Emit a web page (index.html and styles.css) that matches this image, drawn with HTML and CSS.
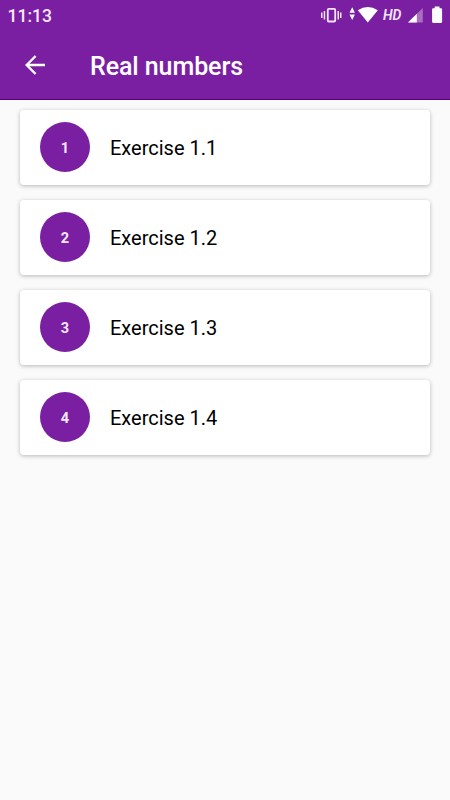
FILE: index.html
```html
<!DOCTYPE html>
<html lang="en">
<head>
<meta charset="utf-8">
<title>Real numbers</title>
<link rel="stylesheet" href="styles.css">
</head>
<body>
<header class="header">
  <div class="status">
    <span class="clock">11:13</span>
    <svg class="status-icons" width="130" height="30" viewBox="320 0 130 30" fill="#fff" aria-hidden="true">
      <path fill="#f3e4f8" d="M321 12.5h1.5v5.5H321zM323.7 11h1.5v8.5h-1.5zM337.5 11h1.5v8.5h-1.5zM340 12.5h1.5v5.5H340z"/>
      <rect x="327.8" y="8.8" width="7.4" height="12.7" rx="1" fill="none" stroke="#f3e4f8" stroke-width="1.8"/>
      <path d="M352.2 7.2l2.7 5.5h-5.4zM352.2 20l-2.7-5.5h5.4z"/>
      <path d="M357.8 10.3Q367.8 3.7 377.8 10.3L367.8 22.6z"/>
      <path d="M408 22.5L422.8 8v14.5z" opacity=".35"/>
      <path d="M408 22.5l8.8-8.8v8.8z"/>
      <path d="M434.7 6.6h4.8v1.6h1.5q1.1 0 1.1 1.1v12.5q0 1.1-1.1 1.1h-7.8q-1.1 0-1.1-1.1V9.300q0-1.1 1.1-1.1h1.5z"/>
    </svg>
    <span class="hd">HD</span>
  </div>
  <div class="toolbar">
    <svg class="back" width="20" height="20" viewBox="0 0 20 20" fill="none" stroke="#fff" stroke-width="2.4" role="img" aria-label="Back"><path d="M20 10H2M10.6 1L1.6 10l9 9"/></svg>
    <h1 class="title">Real numbers</h1>
  </div>
</header>
<main class="list">
  <div class="card"><span class="number">1</span><span class="label">Exercise 1.1</span></div>
  <div class="card"><span class="number">2</span><span class="label">Exercise 1.2</span></div>
  <div class="card"><span class="number">3</span><span class="label">Exercise 1.3</span></div>
  <div class="card"><span class="number">4</span><span class="label">Exercise 1.4</span></div>
</main>
</body>
</html>
```
FILE: styles.css
```css
* { box-sizing: border-box; }
body {
  margin: 0;
  min-height: 800px;
  background: #fafafa;
  font-family: Roboto, sans-serif;
}
.header {
  height: 100px;
  background: #7b1fa2;
  border-bottom: 1px solid #580078;
  color: #fff;
}
.status {
  position: relative;
  display: flex;
  justify-content: space-between;
  height: 30px;
  padding-left: 7.5px;
}
.clock {
  font-size: 17.5px;
  font-weight: 500;
  line-height: 32px;
  color: #f7e9fb;
}
.hd {
  position: absolute;
  left: 383px;
  top: 6px;
  font-size: 14px;
  line-height: 18px;
  font-weight: 600;
  font-style: italic;
  color: #f3e4f8;
}
.toolbar {
  display: flex;
  align-items: center;
  gap: 45px;
  height: 70px;
  padding-left: 25px;
}
.title {
  margin: 0;
  padding-top: 4px;
  font-size: 25px;
  line-height: 30px;
  font-weight: 500;
  letter-spacing: -.08px;
}
.list {
  display: flex;
  flex-direction: column;
  gap: 15px;
  padding: 10px 20px;
}
.card {
  display: flex;
  align-items: flex-start;
  gap: 20px;
  height: 75px;
  padding: 12.4px 0 0 20px;
  background: #fff;
  border-radius: 4px;
  box-shadow: 0 1px 4px rgba(0, 0, 0, .27);
}
.number {
  width: 50px;
  height: 50px;
  border-radius: 50%;
  background: #7b1fa2;
  color: #f7e9fb;
  font-size: 14.5px;
  line-height: 54px;
  font-weight: 700;
  text-align: center;
}
.label {
  font-size: 20px;
  line-height: 53px;
  color: #000;
}
```
